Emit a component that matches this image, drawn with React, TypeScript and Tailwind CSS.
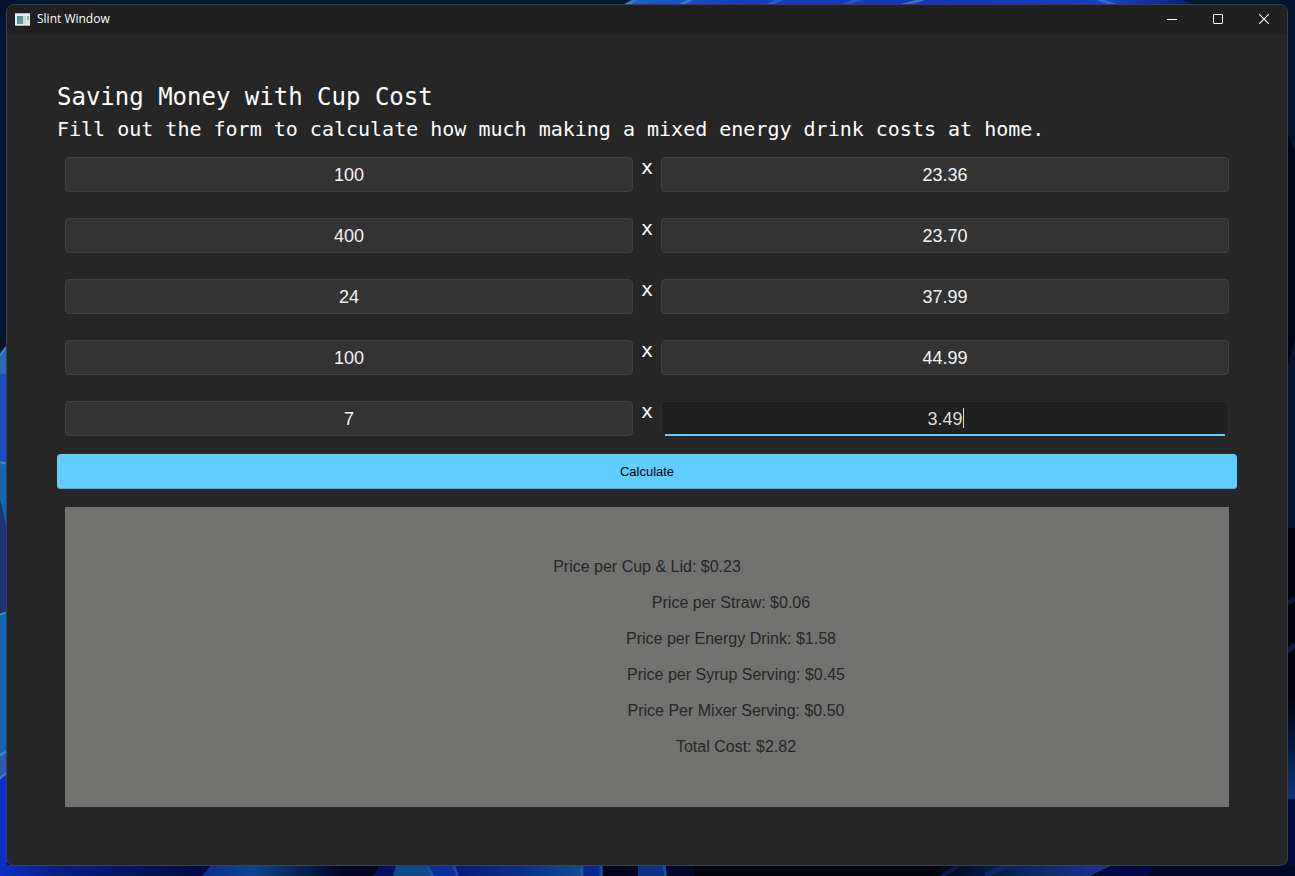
import { useState } from "react";
import type { FormEvent } from "react";

const initialRows = [
  { item: "Cup & Lid", count: "100", price: "23.36" },
  { item: "Straw", count: "400", price: "23.70" },
  { item: "Energy Drink", count: "24", price: "37.99" },
  { item: "Syrup", count: "100", price: "44.99" },
  { item: "Mixer", count: "7", price: "3.49" },
];

const results = [
  { text: "Price per Cup & Lid: $0.23", indent: "" },
  { text: "Price per Straw: $0.06", indent: "pl-[168px]" },
  { text: "Price per Energy Drink: $1.58", indent: "pl-[168px]" },
  { text: "Price per Syrup Serving: $0.45", indent: "pl-[178px]" },
  { text: "Price Per Mixer Serving: $0.50", indent: "pl-[178px]" },
  { text: "Total Cost: $2.82", indent: "pl-[178px]" },
];

const fieldBase =
  "block h-[35px] w-full rounded-[4px] border px-2 pt-0.5 text-center text-[18px] outline-none";
const fieldIdle = "border-[#404040] bg-[#333333] text-[#f4f4f4]";
const fieldActive = "border-[#2d2d2d] bg-[#202020] text-[#dcdcdc]";

function Wallpaper() {
  return (
    <svg
      className="absolute inset-0 h-full w-full"
      viewBox="0 0 1295 876"
      preserveAspectRatio="none"
      aria-hidden="true"
    >
      <defs>
        <linearGradient id="top" x1="0" x2="1">
          <stop offset="0" stopColor="#1c66cf" />
          <stop offset="0.2" stopColor="#153ec4" />
          <stop offset="0.55" stopColor="#1533b8" />
          <stop offset="0.85" stopColor="#1741c8" />
          <stop offset="1" stopColor="#0a1a70" />
        </linearGradient>
        <linearGradient id="bottomLeft" x1="0" x2="1">
          <stop offset="0" stopColor="#0c2fc4" />
          <stop offset="0.25" stopColor="#071f86" />
          <stop offset="1" stopColor="#030a3c" />
        </linearGradient>
        <linearGradient id="bubble" x1="0" x2="1">
          <stop offset="0" stopColor="#0a2f8c" />
          <stop offset="0.35" stopColor="#0b4590" />
          <stop offset="1" stopColor="#020320" />
        </linearGradient>
        <linearGradient id="petal" x1="0" x2="1">
          <stop offset="0" stopColor="#041a78" />
          <stop offset="0.5" stopColor="#082f86" />
          <stop offset="1" stopColor="#0d4f90" />
        </linearGradient>
        <linearGradient id="streak" x1="0" x2="1">
          <stop offset="0" stopColor="#01020e" />
          <stop offset="0.5" stopColor="#06265c" />
          <stop offset="1" stopColor="#1c3596" />
        </linearGradient>
        <linearGradient id="rightGlow" x1="0" x2="0" y1="0" y2="1">
          <stop offset="0" stopColor="#01020e" />
          <stop offset="0.6" stopColor="#04204e" />
          <stop offset="1" stopColor="#143080" />
        </linearGradient>
      </defs>
      <rect width="1295" height="876" fill="#05142e" />

      <path d="M620 6 L634 0 H1183 L1196 6 Z" fill="url(#top)" />
      <g stroke="#4a95d8" strokeWidth="3" opacity="0.65">
        <path d="M622 7 L636 -1" />
        <path d="M676 7 L692 -1" />
        <path d="M763 7 L782 -1" stroke="#3a70d8" />
        <path d="M838 7 L860 -1" stroke="#3a66d0" />
        <path d="M896 7 L924 -1" />
        <path d="M1121 7 L1098 -1" stroke="#4580e0" />
      </g>

      <path d="M0 355 L7 346 V463 H0 Z" fill="#1f4cc0" />
      <path d="M0 355 L7 346 V374 H0 Z" fill="#2b68b8" />
      <path d="M0 463 H7 V530 L0 500 Z" fill="#1764ae" />
      <path d="M0 500 L7 528 V613 H0 Z" fill="#1b3576" />
      <path d="M0 613 H7 V752 L0 757 Z" fill="#1563b5" />
      <path d="M0 756 L7 750 V772 L0 779 Z" fill="#3158b0" />
      <path d="M0 778 L7 772 V876 H0 Z" fill="#0c2fc4" />
      <g stroke="#479abb" strokeWidth="2" opacity="0.8">
        <path d="M-1 356 L8 345" />
        <path d="M-1 462 L8 464" />
        <path d="M-1 615 L8 612" />
        <path d="M-1 756 L8 750" />
        <path d="M-1 779 L8 772" />
      </g>

      <path d="M1287 134 Q1292 140 1295 155 V340 L1287 368 Z" fill="#00031a" />
      <rect x="1287" y="528" width="8" height="240" fill="#01020e" />
      <path d="M1287 604 L1295 598" stroke="#0a1238" strokeWidth="5" />
      <path d="M1287 652 L1295 644" stroke="#0e1848" strokeWidth="5" />
      <rect x="1287" y="700" width="8" height="99" fill="url(#rightGlow)" />
      <rect x="1287" y="799" width="8" height="77" fill="#030c42" />

      <rect y="865" width="210" height="11" fill="url(#bottomLeft)" />
      <path d="M202 876 L211 865 H345 V876 Z" fill="url(#bubble)" />
      <rect x="342" y="865" width="36" height="11" fill="#010420" />
      <path d="M373 876 L381 865 H396 V876 Z" fill="#051260" />
      <path d="M393 876 L396 865 H427 L434 876 Z" fill="#0f4b8c" />
      <path d="M434 876 L427 865 H455 L459 876 Z" fill="#08309a" />
      <path d="M459 876 L455 865 H583 V876 Z" fill="url(#petal)" />
      <path d="M583 865 H603 V876 H583 Z" fill="#072690" />
      <rect x="603" y="865" width="35" height="11" fill="#01021c" />
      <rect x="638" y="865" width="28" height="11" fill="#0d3285" />
      <rect x="666" y="865" width="29" height="11" fill="#02062a" />
      <rect x="695" y="865" width="250" height="11" fill="#01010a" />
      <g stroke="#2a5fa8" strokeWidth="3" opacity="0.6">
        <path d="M427 864 L433 877" />
        <path d="M453 864 L458 877" />
        <path d="M582 864 V877" />
        <path d="M601 864 V877" />
        <path d="M664 864 L666 877" />
      </g>
      <path d="M925 876 L945 865 H1113 L1090 876 Z" fill="url(#streak)" />
      <path d="M942 876 L960 865" stroke="#0c1a58" strokeWidth="4" />
      <path d="M985 876 L1008 865" stroke="#10246c" strokeWidth="5" />
      <path d="M1090 876 L1113 865 H1155 L1148 876 Z" fill="#020b46" />
      <path d="M1148 876 L1155 865 H1295 V876 Z" fill="#020828" />
    </svg>
  );
}

function AppIcon() {
  return (
    <svg width="15" height="13" viewBox="0 0 15 13" aria-hidden="true">
      <defs>
        <linearGradient id="pane" x1="0" x2="1" y1="0" y2="1">
          <stop offset="0" stopColor="#4a7fa8" />
          <stop offset="1" stopColor="#62b48c" />
        </linearGradient>
      </defs>
      <rect width="15" height="13" fill="#e9ebec" />
      <rect width="15" height="1" fill="#b4b8ba" />
      <rect x="2" y="3" width="6" height="8" fill="url(#pane)" />
      <rect x="8" y="3" width="3" height="8" fill="#d2d6d8" />
      <rect x="12" y="3" width="2" height="4" fill="#79bba0" />
      <rect x="12" y="7" width="2" height="4" fill="#d8dcdd" />
      <rect y="12" width="15" height="1" fill="#a9adaf" />
    </svg>
  );
}

function TitleBar() {
  const button = "flex h-full w-[46px] items-center justify-center text-white";
  return (
    <header className="flex h-[30px] items-center justify-between bg-[#202020] pb-0.5 pl-2">
      <div className="flex items-center gap-[7px]">
        <AppIcon />
        <span className="font-['Open_Sans','Noto_Sans',sans-serif] text-[12px] leading-4 text-white">
          Slint Window
        </span>
      </div>
      <div className="flex h-full">
        <button type="button" aria-label="Minimize" className={button}>
          <svg width="10" height="10" viewBox="0 0 10 10">
            <path d="M0 5.5H10" stroke="currentColor" />
          </svg>
        </button>
        <button type="button" aria-label="Maximize" className={button}>
          <svg width="10" height="10" viewBox="0 0 10 10">
            <rect x="0.5" y="0.5" width="9" height="9" rx="0.4" fill="none" stroke="currentColor" />
          </svg>
        </button>
        <button type="button" aria-label="Close" className={button}>
          <svg width="10" height="10" viewBox="0 0 10 10">
            <path d="M0.2 0.2L9.8 9.8M9.8 0.2L0.2 9.8" stroke="currentColor" strokeWidth="1.1" />
          </svg>
        </button>
      </div>
    </header>
  );
}

export default function App() {
  const [rows, setRows] = useState(initialRows);

  const update = (index: number, key: "count" | "price", value: string) =>
    setRows(rows.map((row, i) => (i === index ? { ...row, [key]: value } : row)));

  const submit = (event: FormEvent) => event.preventDefault();

  return (
    <div className="relative flex min-h-screen flex-col bg-[#05142e] pt-1 pr-[7px] pb-[10px] pl-1.5 font-['Liberation_Sans',Arial,sans-serif]">
      <Wallpaper />
      <div className="relative flex flex-1 flex-col overflow-hidden rounded-lg border border-[#39414f] bg-[#262626]">
        <TitleBar />
        <main className="flex flex-col px-[50px] pt-[46px] pb-14">
          <h1 className="font-['DejaVu_Sans_Mono',monospace] text-[24px] leading-8 text-white">
            Saving Money with Cup Cost
          </h1>
          <p className="font-['DejaVu_Sans_Mono',monospace] text-[20px] leading-8 text-white">
            Fill out the form to calculate how much making a mixed energy drink costs at home.
          </p>
          <form onSubmit={submit} className="mt-3 flex flex-col gap-[18px]">
            <div className="flex flex-col gap-[26px] px-2">
              {rows.map((row, i) => {
                const active = i === rows.length - 1;
                return (
                  <div key={row.item} className="flex gap-2">
                    <div className="flex-1">
                      <input
                        aria-label={`${row.item} quantity`}
                        value={row.count}
                        onChange={(e) => update(i, "count", e.target.value)}
                        className={`${fieldBase} ${fieldIdle}`}
                      />
                    </div>
                    <span className="w-3 text-center font-['DejaVu_Sans_Mono',monospace] text-[20px] leading-5 text-white">
                      x
                    </span>
                    <div className="relative flex-1">
                      <input
                        aria-label={`${row.item} price`}
                        value={row.price}
                        onChange={(e) => update(i, "price", e.target.value)}
                        className={`${fieldBase} ${active ? fieldActive : fieldIdle}`}
                      />
                      {active && (
                        <>
                          <span className="absolute inset-x-1 bottom-0 h-0.5 bg-[#60cdff]" />
                          <span className="absolute top-[7px] left-1/2 ml-[18px] h-5 w-px bg-[#dcdcdc]" />
                        </>
                      )}
                    </div>
                  </div>
                );
              })}
            </div>
            <button
              type="submit"
              className="h-[35px] rounded-[4px] bg-[#60cdff] pt-px text-[13px] text-black shadow-[inset_0_-1px_0_#52afda]"
            >
              Calculate
            </button>
          </form>
          <section className="mx-2 mt-[18px] bg-[#727270] py-[42px] text-center text-[16px] leading-9 text-[#262626]">
            {results.map((result) => (
              <p key={result.text} className={result.indent}>
                {result.text}
              </p>
            ))}
          </section>
        </main>
      </div>
    </div>
  );
}
